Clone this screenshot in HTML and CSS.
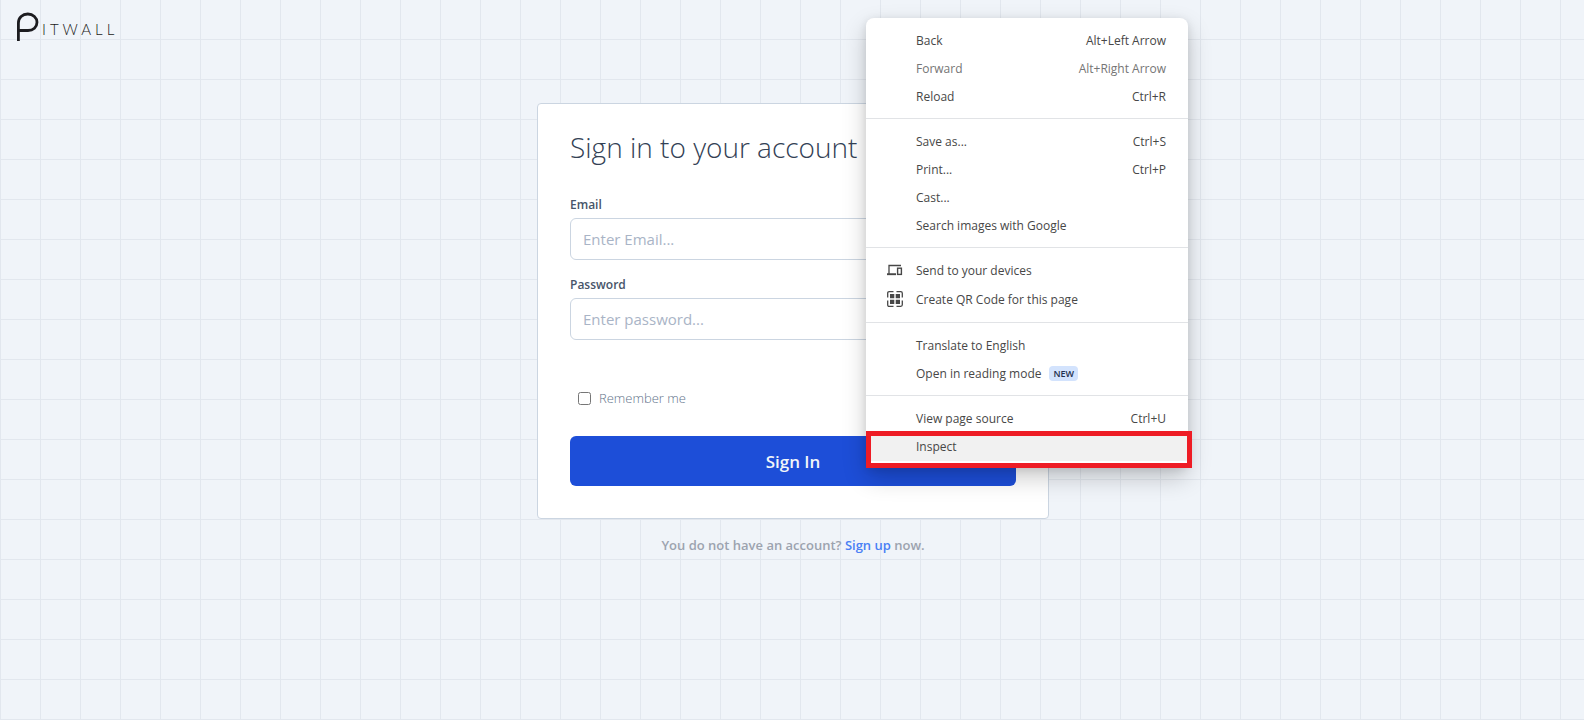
FILE: index.html
```html
<!DOCTYPE html>
<html lang="en">
<head>
<meta charset="utf-8">
<meta name="viewport" content="width=device-width, initial-scale=1">
<title>Pitwall</title>
<link rel="stylesheet" href="styles.css">
</head>
<body>
<header class="site-header">
  <a class="logo" href="#" aria-label="Pitwall">
    <svg class="logo-mark" width="23" height="30" viewBox="0 0 23 30" fill="none" stroke="currentColor" stroke-width="2.800" aria-hidden="true">
      <path d="M2.400 29V11C2.400 5.500 6.500 2 11.800 2s9.200 3.700 9.200 8.300c0 4.800-3.800 8.200-9 8.200H3"/>
    </svg>
    <span class="logo-text">ITWALL</span>
  </a>
</header>

<main class="page">
  <form class="card">
    <h1 class="title">Sign in to your account</h1>
    <div class="field">
      <label class="label" for="email">Email</label>
      <input class="input" id="email" type="email" placeholder="Enter Email...">
    </div>
    <div class="field">
      <label class="label" for="password">Password</label>
      <input class="input" id="password" type="password" placeholder="Enter password...">
    </div>
    <div class="remember">
      <input class="checkbox" id="remember" type="checkbox">
      <label for="remember">Remember me</label>
    </div>
    <button class="submit" type="button">Sign In</button>
  </form>
  <p class="signup">You do not have an account? <a class="link" href="#">Sign up</a> now.</p>
</main>

<div class="menu" role="menu">
  <div class="group">
    <button class="item" role="menuitem"><span>Back</span><span class="keys">Alt+Left Arrow</span></button>
    <button class="item muted" role="menuitem"><span>Forward</span><span class="keys">Alt+Right Arrow</span></button>
    <button class="item" role="menuitem"><span>Reload</span><span class="keys">Ctrl+R</span></button>
  </div>
  <div class="group">
    <button class="item" role="menuitem"><span>Save as...</span><span class="keys">Ctrl+S</span></button>
    <button class="item" role="menuitem"><span>Print...</span><span class="keys">Ctrl+P</span></button>
    <button class="item" role="menuitem"><span>Cast...</span></button>
    <button class="item" role="menuitem"><span>Search images with Google</span></button>
  </div>
  <div class="group">
    <button class="item with-icon" role="menuitem">
      <svg class="icon" width="16" height="16" viewBox="0 0 16 16" fill="none" stroke="currentColor" aria-hidden="true">
        <path d="M14 3.500H2V12" stroke-width="1.300"/>
        <path d="M0 12.200h9" stroke-width="1.900"/>
        <rect x="10.600" y="6.200" width="3.800" height="6.200" stroke-width="1.400"/>
      </svg>
      <span>Send to your devices</span>
    </button>
    <button class="item with-icon tall" role="menuitem">
      <svg class="icon" width="16" height="16" viewBox="0 0 16 16" aria-hidden="true">
        <path d="M.7 6.500V2.200Q.7.700 2.200.700H6.500M9.500.7h4.300q1.500 0 1.500 1.500V6.500M15.300 9.500v4.300q0 1.500-1.500 1.500H9.500M6.500 15.300H2.200q-1.500 0-1.500-1.500V9.500" fill="none" stroke="currentColor" stroke-width="1.300"/>
        <path d="M3 3h4.300v4.300H3zM8.700 3H13v4.300H8.700zM3 8.700h4.300V13H3zM8.700 8.700H13V13H8.700z" fill="currentColor"/>
      </svg>
      <span>Create QR Code for this page</span>
    </button>
  </div>
  <div class="group">
    <button class="item" role="menuitem"><span>Translate to English</span></button>
    <button class="item" role="menuitem"><span>Open in reading mode</span><span class="badge">NEW</span></button>
  </div>
  <div class="group">
    <button class="item" role="menuitem"><span>View page source</span><span class="keys">Ctrl+U</span></button>
    <button class="item active" role="menuitem"><span>Inspect</span></button>
  </div>
  <div class="highlight"></div>
</div>
</body>
</html>
```

FILE: styles.css
```css
* {
  box-sizing: border-box;
}

body {
  margin: 0;
  min-height: 100vh;
  font-family: "Open Sans", "Noto Sans", sans-serif;
  background-color: #f0f4f9;
  background-image:
    linear-gradient(to right, #e2e7ee 1px, transparent 1px),
    linear-gradient(to top, #e2e7ee 1px, transparent 1px);
  background-size: 40px 40px;
}

button,
input {
  font-family: inherit;
}

.site-header {
  padding: 12px 16px 0;
}

.logo {
  display: inline-flex;
  align-items: center;
  gap: 3px;
  color: #1c1c20;
  text-decoration: none;
}

.logo-text {
  padding-top: 4px;
  font-family: Lato, sans-serif;
  font-size: 15px;
  line-height: 20px;
  font-weight: 300;
  letter-spacing: 4px;
}

.page {
  display: flex;
  flex-direction: column;
  align-items: center;
  padding: 56px 16px 0 18px;
}

.card {
  display: flex;
  flex-direction: column;
  width: 100%;
  max-width: 512px;
  padding: 23px 32px 32px;
  border: 1px solid #cbd5e1;
  border-radius: 4px;
  background: #fff;
}

.title {
  margin: 0 0 28px;
  font-size: 28px;
  line-height: 40px;
  font-weight: 300;
  color: #334155;
}

.field {
  display: flex;
  flex-direction: column;
  margin-bottom: 15px;
}

.label {
  margin-bottom: 3px;
  font-size: 12px;
  line-height: 20px;
  font-weight: 600;
  color: #475569;
}

.input {
  width: 100%;
  height: 42px;
  padding: 0 12px;
  border: 1px solid #cbd5e1;
  border-radius: 6px;
  font-size: 15px;
  background: #fff;
}

.input::placeholder {
  color: #a9b4c6;
}

.remember {
  display: flex;
  align-items: center;
  gap: 8px;
  margin: 33px 8px 28px;
  font-size: 13px;
  line-height: 20px;
  font-weight: 300;
  color: #64748b;
}

.checkbox {
  width: 13px;
  height: 13px;
  margin: 0;
}

.submit {
  height: 50px;
  border: 0;
  border-radius: 6px;
  font-size: 17px;
  font-weight: 600;
  color: #f1f5f9;
  background: #1d4ed8;
}

.signup {
  margin: 16px 0 0;
  font-size: 13px;
  line-height: 20px;
  font-weight: 600;
  color: #9ca3af;
}

.link {
  color: #4a80f5;
  text-decoration: none;
}

.menu {
  position: absolute;
  top: 18px;
  left: 866px;
  width: 322px;
  border-radius: 8px;
  background: #fff;
  box-shadow: 0 10px 24px rgba(0, 0, 0, 0.2), 0 2px 8px rgba(0, 0, 0, 0.1);
}

.group {
  padding: 9px 0 7px;
}

.group + .group {
  border-top: 1px solid #e1e3e6;
}

.item {
  display: flex;
  align-items: center;
  width: 100%;
  height: 28px;
  padding: 0 22px 2px 50px;
  border: 0;
  font-size: 12px;
  color: #474747;
  background: none;
}

.with-icon {
  gap: 13px;
  padding-left: 21px;
}

.tall {
  height: 30px;
}

.muted {
  color: #757575;
}

.keys {
  margin-left: auto;
}

.active {
  background: #f1f1f1;
}

.badge {
  margin-left: 8px;
  padding: 0 4px;
  border-radius: 4px;
  font-size: 9px;
  line-height: 15px;
  font-weight: 600;
  color: #1f2f4d;
  background: #d3e3fd;
}

.highlight {
  position: absolute;
  right: -4px;
  bottom: 0;
  left: 0;
  height: 37px;
  border: 5px solid #ee1c25;
  pointer-events: none;
}
```
